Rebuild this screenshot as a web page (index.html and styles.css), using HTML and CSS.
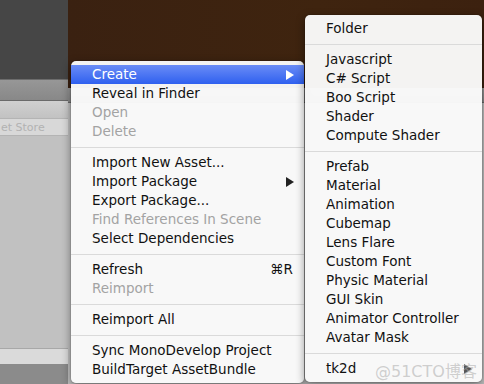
FILE: index.html
```html
<!DOCTYPE html>
<html lang="en">
<head>
  <meta charset="UTF-8">
  <title>Project Context Menu</title>
  <link rel="stylesheet" href="styles.css">
</head>
<body>
  <div class="editor">
    <div class="left-col">
      <div class="hierarchy"></div>
      <div class="toolbar"></div>
      <div class="band"></div>
      <div class="search-row"><span>et Store</span></div>
      <div class="project"></div>
      <div class="footer-light"></div>
      <div class="footer-dark"></div>
    </div>
    <div class="right-col">
      <div class="scene"></div>
      <div class="toolbar short"></div>
      <div class="project"></div>
    </div>
  </div>

  <div class="menu main-menu">
    <div class="item active">Create<svg class="arrow" viewBox="0 0 8 10"><polygon points="0,0 8,5 0,10"/></svg></div>
    <div class="item">Reveal in Finder</div>
    <div class="item disabled">Open</div>
    <div class="item disabled">Delete</div>
    <div class="sep"></div>
    <div class="item">Import New Asset...</div>
    <div class="item">Import Package<svg class="arrow" viewBox="0 0 8 10"><polygon points="0,0 8,5 0,10"/></svg></div>
    <div class="item">Export Package...</div>
    <div class="item disabled">Find References In Scene</div>
    <div class="item">Select Dependencies</div>
    <div class="sep"></div>
    <div class="item">Refresh<span class="shortcut">⌘R</span></div>
    <div class="item disabled">Reimport</div>
    <div class="sep"></div>
    <div class="item">Reimport All</div>
    <div class="sep"></div>
    <div class="item">Sync MonoDevelop Project</div>
    <div class="item">BuildTarget AssetBundle</div>
  </div>

  <div class="menu sub-menu">
    <div class="item">Folder</div>
    <div class="sep"></div>
    <div class="item">Javascript</div>
    <div class="item">C# Script</div>
    <div class="item">Boo Script</div>
    <div class="item">Shader</div>
    <div class="item">Compute Shader</div>
    <div class="sep"></div>
    <div class="item">Prefab</div>
    <div class="item">Material</div>
    <div class="item">Animation</div>
    <div class="item">Cubemap</div>
    <div class="item">Lens Flare</div>
    <div class="item">Custom Font</div>
    <div class="item">Physic Material</div>
    <div class="item">GUI Skin</div>
    <div class="item">Animator Controller</div>
    <div class="item">Avatar Mask</div>
    <div class="sep"></div>
    <div class="item">tk2d<svg class="arrow dim" viewBox="0 0 8 10"><polygon points="0,0 8,5 0,10"/></svg></div>
  </div>

  <div class="watermark">@51CTO博客</div>
</body>
</html>
```

FILE: styles.css
```css
* {
  margin: 0;
  padding: 0;
  box-sizing: border-box;
}

body {
  width: 484px;
  height: 384px;
  overflow: hidden;
  font-family: 'DejaVu Sans', 'Noto Sans CJK SC', sans-serif;
  position: relative;
}

.editor {
  display: flex;
  height: 384px;
}

.left-col {
  width: 68px;
  display: flex;
  flex-direction: column;
}

.right-col {
  flex: 1;
  display: flex;
  flex-direction: column;
}

.hierarchy {
  height: 80px;
  background: #464646;
  border-bottom: 1px solid #6c6c6c;
}

.scene {
  height: 88px;
  background: linear-gradient(90deg, #3a2111, #3f240f 60%, #3c210f);
}

.toolbar {
  height: 21px;
  background: linear-gradient(#979797, #888888);
  border-bottom: 1px solid #6a6a6a;
}

.toolbar.short {
  height: 15px;
}

.band {
  height: 17px;
  background: linear-gradient(#d0d0d0, #c2c2c2);
}

.search-row {
  height: 18px;
  background: #d8d8d8;
  border-top: 1px solid #b4b4b4;
  border-bottom: 1px solid #b4b4b4;
  display: flex;
  align-items: center;
  padding-left: 1px;
  white-space: nowrap;
  font-size: 11px;
  color: #b2b2b2;
}

.project {
  flex: 1;
  background: #c1c1c1;
}

.footer-light {
  height: 16px;
  background: #dadada;
  border-top: 1px solid #a8a8a8;
}

.footer-dark {
  height: 20px;
  background: #8b8b8b;
}

/* menus sit over the editor */
.menu {
  position: absolute;
  background: rgba(250, 250, 250, 0.97);
  border-radius: 5px;
  box-shadow: 0 3px 10px rgba(0, 0, 0, 0.45), 0 0 0 1px rgba(0, 0, 0, 0.08);
  padding: 4px 0;
  font-size: 13.5px;
  color: #111;
}

.main-menu {
  left: 71px;
  top: 61px;
  width: 233px;
}

.sub-menu {
  left: 305px;
  top: 15px;
  width: 177px;
}

.item {
  height: 19px;
  line-height: 19px;
  padding: 0 10px 0 21px;
  display: flex;
  align-items: center;
  justify-content: space-between;
  white-space: nowrap;
}

.item.active {
  background: linear-gradient(#6a8cf6, #2f60ef);
  color: #fff;
}

.item.disabled {
  color: #a3a3a3;
}

.shortcut {
  padding-right: 1px;
}

.arrow {
  width: 8px;
  height: 10px;
  fill: #222;
}

.active .arrow {
  fill: #fff;
}

.arrow.dim {
  fill: #555;
}

.sep {
  height: 12px;
  display: flex;
  align-items: center;
}

.sep::after {
  content: '';
  flex: 1;
  height: 1px;
  background: #dadada;
}

.watermark {
  position: absolute;
  left: 375px;
  top: 358px;
  font-size: 16px;
  color: rgba(170, 170, 170, 0.55);
}
```
